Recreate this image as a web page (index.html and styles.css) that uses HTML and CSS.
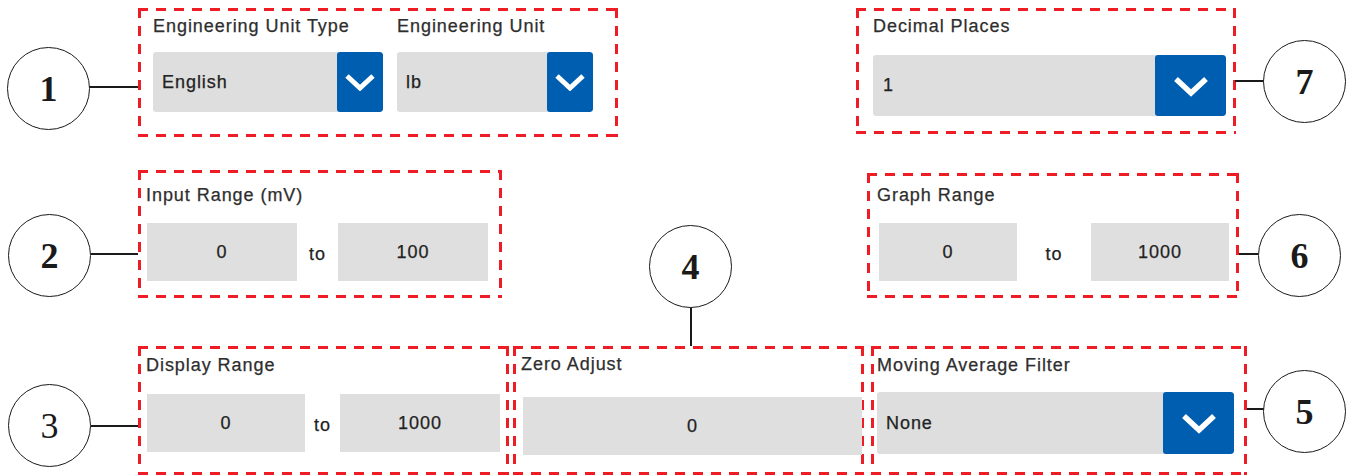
FILE: index.html
```html
<!DOCTYPE html>
<html lang="en">

<head>
    <meta charset="UTF-8">
    <title>Channel Settings</title>
    <link rel="stylesheet" href="styles.css">
</head>

<body>
    <div class="figure">
        <!-- row 1 -->
        <div class="row row1">
            <div class="box box-unit">
                <div class="group">
                    <div class="label">Engineering Unit Type</div>
                    <div class="select sel-type">
                        <span class="value">English</span>
                        <span class="btn btn-sm">
                            <svg width="32" height="18" viewBox="0 0 32 18"><path d="M3 3 L16 15 L29 3" fill="none" stroke="#fff" stroke-width="5"/></svg>
                        </span>
                    </div>
                </div>
                <div class="group">
                    <div class="label">Engineering Unit</div>
                    <div class="select sel-unit">
                        <span class="value">lb</span>
                        <span class="btn btn-sm">
                            <svg width="32" height="18" viewBox="0 0 32 18"><path d="M3 3 L16 15 L29 3" fill="none" stroke="#fff" stroke-width="5"/></svg>
                        </span>
                    </div>
                </div>
            </div>
            <div class="box box-decimal">
                <div class="label">Decimal Places</div>
                <div class="select sel-decimal">
                    <span class="value">1</span>
                    <span class="btn btn-lg">
                        <svg width="38" height="22" viewBox="0 0 38 22"><path d="M4 4 L19 18 L34 4" fill="none" stroke="#fff" stroke-width="5.5"/></svg>
                    </span>
                </div>
            </div>
        </div>

        <!-- row 2 -->
        <div class="row row2">
            <div class="box box-input">
                <div class="label">Input Range (mV)</div>
                <div class="range">
                    <div class="field">0</div>
                    <div class="to">to</div>
                    <div class="field">100</div>
                </div>
            </div>
            <div class="box box-graph">
                <div class="label">Graph Range</div>
                <div class="range">
                    <div class="field">0</div>
                    <div class="to">to</div>
                    <div class="field">1000</div>
                </div>
            </div>
        </div>

        <!-- row 3 -->
        <div class="row row3">
            <div class="box box-display">
                <div class="label">Display Range</div>
                <div class="range">
                    <div class="field f1">0</div>
                    <div class="to">to</div>
                    <div class="field f2">1000</div>
                </div>
            </div>
            <div class="box box-zero">
                <div class="label">Zero Adjust</div>
                <div class="field">0</div>
            </div>
            <div class="box box-filter">
                <div class="label">Moving Average Filter</div>
                <div class="select sel-filter">
                    <span class="value">None</span>
                    <span class="btn btn-lg">
                        <svg width="38" height="22" viewBox="0 0 38 22"><path d="M4 4 L19 18 L34 4" fill="none" stroke="#fff" stroke-width="5.5"/></svg>
                    </span>
                </div>
            </div>
        </div>

        <!-- callouts -->
        <div class="lead lead-h" style="left:89px;top:86px;width:49px"></div>
        <div class="lead lead-h" style="left:91px;top:253px;width:47px"></div>
        <div class="lead lead-h" style="left:91px;top:425px;width:47px"></div>
        <div class="lead lead-v" style="left:690px;top:306px;height:40px"></div>
        <div class="lead lead-h" style="left:1247px;top:408px;width:17px"></div>
        <div class="lead lead-h" style="left:1239px;top:253px;width:19px"></div>
        <div class="lead lead-h" style="left:1235px;top:80px;width:29px"></div>

        <div class="callout" style="left:7px;top:47px">1</div>
        <div class="callout" style="left:8px;top:214px">2</div>
        <div class="callout light" style="left:8px;top:384px">3</div>
        <div class="callout" style="left:649px;top:225px">4</div>
        <div class="callout" style="left:1263px;top:370px">5</div>
        <div class="callout" style="left:1258px;top:214px">6</div>
        <div class="callout" style="left:1263px;top:40px">7</div>
    </div>
</body>

</html>
```

FILE: styles.css
```css
* {
    padding: 0;
    margin: 0;
    box-sizing: border-box;
}
body {
    background: #fff;
    font-family: "Liberation Sans", Arial, sans-serif;
    font-size: 18px;
    letter-spacing: 0.95px;
    color: #222;
    -webkit-text-stroke: 0.25px currentColor;
}
.figure {
    position: relative;
    width: 1354px;
    height: 475px;
    overflow: hidden;
}
.row {
    display: flex;
    align-items: flex-start;
    padding-left: 138px;
}
.row1 {
    padding-top: 8px;
}
.row2 {
    margin-top: 33px;
}
.row3 {
    margin-top: 48px;
}

/* dashed red frame */
.box {
    --dash: #ee1d25;
    background:
        repeating-linear-gradient(90deg, var(--dash) 0 10px, transparent 10px 18px) left top / 100% 3px no-repeat,
        repeating-linear-gradient(90deg, var(--dash) 0 10px, transparent 10px 18px) left bottom / 100% 3px no-repeat,
        repeating-linear-gradient(180deg, var(--dash) 0 10px, transparent 10px 18px) left top / 3px 100% no-repeat,
        repeating-linear-gradient(180deg, var(--dash) 0 10px, transparent 10px 18px) right top / 3px 100% no-repeat;
}
.label {
    line-height: 20px;
    color: #2e2e2e;
    white-space: nowrap;
}

/* selects */
.select {
    display: flex;
    align-items: stretch;
    background: #dedede;
    border-radius: 3px;
    overflow: hidden;
}
.select .value {
    flex: 1;
    display: flex;
    align-items: center;
    padding-left: 9px;
    color: #222;
}
.btn {
    display: flex;
    align-items: center;
    justify-content: center;
    background: #005eb0;
    border-radius: 3px;
}
.btn-sm {
    width: 46px;
}
.btn-lg {
    width: 71px;
}

/* numeric fields */
.range {
    display: flex;
    align-items: center;
}
.field {
    display: flex;
    align-items: center;
    justify-content: center;
    height: 58px;
    background: #dfdfdf;
    color: #222;
}
.to {
    text-align: center;
    color: #222;
    padding-top: 4px;
}

/* box 1 */
.box-unit {
    display: flex;
    gap: 14px;
    width: 480px;
    height: 129px;
    padding: 8px 0 0 15px;
}
.box-unit .select {
    margin-top: 16px;
    height: 60px;
}
.sel-type {
    width: 230px;
}
.sel-unit {
    width: 196px;
}

/* box 7 */
.box-decimal {
    margin-left: 238px;
    width: 380px;
    height: 126px;
    padding: 8px 0 0 17px;
}
.sel-decimal {
    margin-top: 19px;
    width: 353px;
    height: 61px;
}
.sel-decimal .value {
    padding-left: 10px;
}

/* box 2 */
.box-input {
    width: 364px;
    height: 128px;
    padding: 15px 0 0 8px;
}
.box-input .range {
    margin-top: 18px;
    padding-left: 1px;
}
.box-input .field {
    width: 150px;
}
.box-input .to {
    width: 41px;
}

/* box 6 */
.box-graph {
    margin-left: 365px;
    margin-top: 3px;
    width: 372px;
    height: 125px;
    padding: 12px 0 0 10px;
}
.box-graph .range {
    margin-top: 18px;
    padding-left: 2px;
}
.box-graph .field {
    width: 138px;
}
.box-graph .to {
    width: 74px;
}

/* box 3 */
.box-display {
    width: 371px;
    height: 129px;
    padding: 9px 0 0 8px;
}
.box-display .range {
    margin-top: 19px;
    padding-left: 1px;
}
.box-display .f1 {
    width: 158px;
}
.box-display .f2 {
    width: 160px;
}
.box-display .to {
    width: 35px;
}

/* box 4 */
.box-zero {
    margin-left: 4px;
    width: 351px;
    height: 129px;
    padding: 8px 0 0 8px;
}
.box-zero .field {
    margin: 23px 0 0 2px;
    width: 339px;
}

/* box 5 */
.box-filter {
    margin-left: 7px;
    width: 376px;
    height: 129px;
    padding: 9px 0 0 6px;
}
.sel-filter {
    margin-top: 17px;
    width: 357px;
    height: 62px;
}

/* callouts */
.callout {
    position: absolute;
    width: 83px;
    height: 83px;
    border: 1.5px solid #1a1a1a;
    border-radius: 50%;
    background: #fff;
    display: flex;
    align-items: center;
    justify-content: center;
    font-family: "Liberation Serif", "DejaVu Serif", serif;
    font-weight: bold;
    font-size: 36px;
    letter-spacing: 0;
    color: #1a1a1a;
    -webkit-text-stroke: 0;
}
.callout.light {
    font-weight: normal;
}
.lead {
    position: absolute;
    background: #1a1a1a;
}
.lead-h {
    height: 2px;
}
.lead-v {
    width: 2px;
}
```
